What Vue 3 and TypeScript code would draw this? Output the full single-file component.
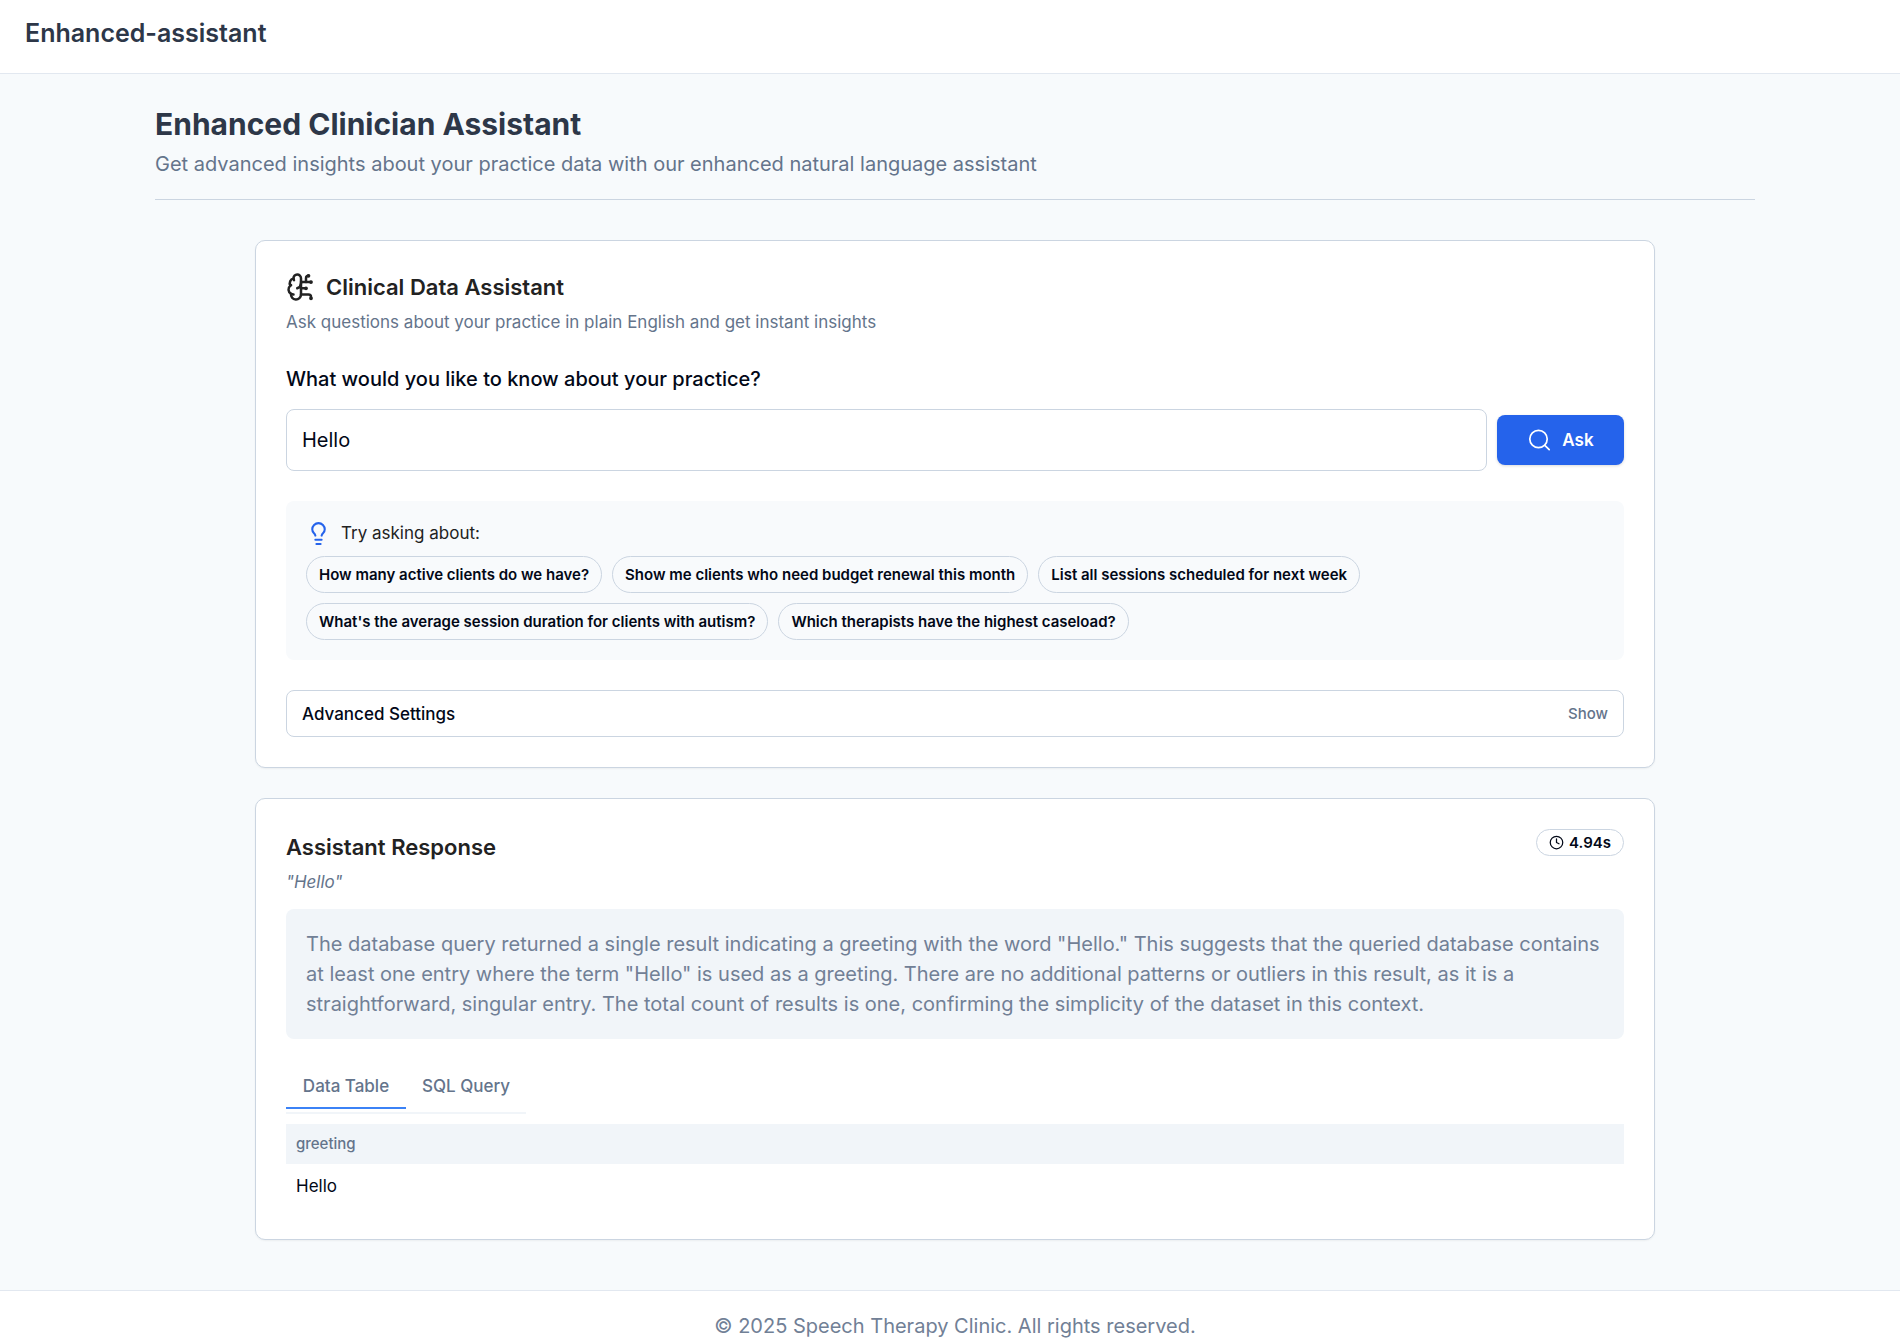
<script setup lang="ts">
import { ref } from 'vue'

const question = ref('Hello')
const suggestions: string[] = [
  'How many active clients do we have?',
  'Show me clients who need budget renewal this month',
  'List all sessions scheduled for next week',
  "What's the average session duration for clients with autism?",
  'Which therapists have the highest caseload?',
]
const activeTab = ref('Data Table')
const tabs: string[] = ['Data Table', 'SQL Query']
const columns: string[] = ['greeting']
const rows: string[][] = [['Hello']]
</script>

<template>
  <div class="page">
    <header class="topbar">Enhanced-assistant</header>

    <main class="main">
      <div class="container">
        <div class="intro">
          <h1>Enhanced Clinician Assistant</h1>
          <p>Get advanced insights about your practice data with our enhanced natural language assistant</p>
        </div>

        <div class="stack">
          <section class="card">
            <h2 class="title">
              <svg class="icon brain" viewBox="0 0 24 24" aria-hidden="true">
                <path d="M12 5a3 3 0 1 0-5.997.125 4 4 0 0 0-2.526 5.77 4 4 0 0 0 .556 6.588A4 4 0 1 0 12 18Z" />
                <path d="M9 13a4.5 4.5 0 0 0 3-4" />
                <path d="M6.003 5.125A3 3 0 0 0 6.401 6.5" />
                <path d="M3.477 10.896a4 4 0 0 1 .585-.396" />
                <path d="M6 18a4 4 0 0 1-1.967-.516" />
                <path d="M12 13h4" />
                <path d="M12 18h6a2 2 0 0 1 2 2v1" />
                <path d="M12 8h8" />
                <path d="M16 8V5a2 2 0 0 1 2-2" />
                <circle cx="16" cy="13" r=".5" />
                <circle cx="18" cy="3" r=".5" />
                <circle cx="20" cy="21" r=".5" />
                <circle cx="20" cy="8" r=".5" />
              </svg>
              Clinical Data Assistant
            </h2>
            <p class="description">Ask questions about your practice in plain English and get instant insights</p>

            <form class="ask-form" @submit.prevent>
              <label for="question">What would you like to know about your practice?</label>
              <div class="ask-row">
                <input id="question" v-model="question" type="text" />
                <button class="ask" type="submit">
                  <svg class="icon" viewBox="0 0 25 25" aria-hidden="true">
                    <circle cx="11.5" cy="11" r="8.7" />
                    <path d="M17.8 17.3l4.4 4.4" />
                  </svg>
                  Ask
                </button>
              </div>
            </form>

            <div class="hints">
              <p class="hints-title">
                <svg class="icon bulb" viewBox="0 0 24 24" aria-hidden="true">
                  <path d="M15 14c.2-1 .7-1.7 1.5-2.5 1-.9 1.5-2.2 1.5-3.5A6 6 0 0 0 6 8c0 1 .2 2.2 1.5 3.5.7.7 1.3 1.5 1.5 2.5" />
                  <path d="M9 18h6" />
                  <path d="M10 22h4" />
                </svg>
                Try asking about:
              </p>
              <div class="chips">
                <button v-for="s in suggestions" :key="s" class="chip" type="button" @click="question = s">{{ s }}</button>
              </div>
            </div>

            <button class="advanced" type="button">
              <span>Advanced Settings</span>
              <span class="show">Show</span>
            </button>
          </section>

          <section class="card">
            <div class="response-head">
              <div class="response-title">
                <h2 class="title">Assistant Response</h2>
                <p class="description quote">"Hello"</p>
              </div>
              <span class="badge">
                <svg class="icon" viewBox="0 0 24 24" aria-hidden="true">
                  <circle cx="12" cy="12" r="10" />
                  <path d="M12 6v6l4 2" />
                </svg>
                4.94s
              </span>
            </div>

            <p class="answer">
              The database query returned a single result indicating a greeting with the word "Hello." This suggests that the
              queried database contains at least one entry where the term "Hello" is used as a greeting. There are no
              additional patterns or outliers in this result, as it is a straightforward, singular entry. The total count of
              results is one, confirming the simplicity of the dataset in this context.
            </p>

            <div class="tabs" role="tablist">
              <button
                v-for="tab in tabs"
                :key="tab"
                class="tab"
                :class="{ active: tab === activeTab }"
                type="button"
                role="tab"
                :aria-selected="tab === activeTab"
                @click="activeTab = tab"
              >
                {{ tab }}
              </button>
            </div>

            <table class="results">
              <thead>
                <tr>
                  <th v-for="c in columns" :key="c" scope="col">{{ c }}</th>
                </tr>
              </thead>
              <tbody>
                <tr v-for="(row, i) in rows" :key="i">
                  <td v-for="(cell, j) in row" :key="j">{{ cell }}</td>
                </tr>
              </tbody>
            </table>
          </section>
        </div>
      </div>
    </main>

    <footer class="footer">© 2025 Speech Therapy Clinic. All rights reserved.</footer>
  </div>
</template>

<style>
html,
body {
  margin: 0;
  overflow-x: hidden;
  background: #f7fafc;
}
</style>

<style scoped>
* {
  box-sizing: border-box;
}
.page {
  font-family: Inter, "Liberation Sans", sans-serif;
  font-size: 20px;
  line-height: 30px;
  color: #020817;
}
h1,
h2,
p {
  margin: 0;
}
button,
input {
  font: inherit;
  color: inherit;
}
.icon {
  flex: none;
  fill: none;
  stroke: currentColor;
  stroke-width: 2;
  stroke-linecap: round;
  stroke-linejoin: round;
}
.topbar {
  height: 74px;
  padding: 18px 25px;
  background: #fff;
  border-bottom: 1px solid #e2e8f0;
  font-size: 25px;
  font-weight: 600;
  color: #2d3748;
}
.main {
  padding: 30px 20px 50px 30px;
}
.container {
  max-width: 1600px;
  margin: 0 auto;
}
.intro {
  padding-bottom: 20px;
  border-bottom: 1px solid #cbd5e1;
  color: #64748b;
}
h1 {
  font-size: 30px;
  line-height: 40px;
  font-weight: 700;
  color: #2d3748;
}
.intro p {
  margin-top: 5px;
}
.stack {
  display: flex;
  flex-direction: column;
  gap: 30px;
  max-width: 1400px;
  margin: 40px auto 0;
}
.card {
  padding: 30px;
  background: #fff;
  border: 1px solid #cbd5e1;
  border-radius: 10px;
  box-shadow: 0 1px 2px rgba(0, 0, 0, 0.05);
}
.title {
  display: flex;
  align-items: center;
  gap: 10px;
  font-size: 22px;
  line-height: 32px;
  font-weight: 600;
  color: #222;
}
.brain {
  width: 30px;
  height: 30px;
}
.description {
  margin-top: 7px;
  font-size: 17px;
  line-height: 24px;
  color: #64748b;
}
.quote {
  font-style: italic;
}
.ask-form {
  margin-top: 30px;
}
.ask-form label {
  display: block;
  font-weight: 500;
}
.ask-row {
  display: flex;
  align-items: center;
  gap: 10px;
  margin-top: 15px;
}
.ask-row input {
  flex: 1;
  min-width: 0;
  height: 62px;
  padding: 0 15px;
  border: 1px solid #cbd5e1;
  border-radius: 8px;
  background: #fff;
}
.ask {
  display: flex;
  align-items: center;
  justify-content: center;
  gap: 10px;
  min-width: 127px;
  height: 50px;
  padding: 0 30px;
  border: 0;
  border-radius: 8px;
  background: #2563eb;
  box-shadow: 0 1px 3px rgba(0, 0, 0, 0.15);
  font-size: 17px;
  font-weight: 600;
  color: #fff;
}
.ask .icon {
  width: 25px;
  height: 25px;
  stroke-width: 1.7;
}
.hints {
  margin-top: 30px;
  padding: 20px;
  border-radius: 8px;
  background: #f8fafc;
}
.hints-title {
  display: flex;
  align-items: center;
  gap: 10px;
  font-size: 17px;
  line-height: 25px;
  color: #222;
}
.bulb {
  width: 25px;
  height: 25px;
  color: #2563eb;
}
.chips {
  display: flex;
  flex-wrap: wrap;
  gap: 10px;
  margin-top: 10px;
}
.chip {
  height: 37px;
  padding: 0 12px;
  border: 1px solid #cbd5e1;
  border-radius: 19px;
  background: transparent;
  font-size: 15px;
  line-height: 20px;
  font-weight: 600;
}
.advanced {
  display: flex;
  align-items: center;
  justify-content: space-between;
  width: 100%;
  height: 47px;
  margin-top: 30px;
  padding: 0 15px;
  border: 1px solid #cbd5e1;
  border-radius: 8px;
  background: #fff;
  font-size: 17px;
  font-weight: 500;
}
.show {
  font-size: 15px;
  color: #64748b;
}
.response-head {
  display: flex;
  align-items: flex-start;
  justify-content: space-between;
}
.response-title {
  padding-top: 2px;
}
.badge {
  display: flex;
  align-items: center;
  gap: 5px;
  height: 27px;
  padding: 0 12px;
  border: 1px solid #cbd5e1;
  border-radius: 14px;
  font-size: 15px;
  line-height: 20px;
  font-weight: 600;
}
.badge .icon {
  width: 15px;
  height: 15px;
}
.answer {
  margin-top: 15px;
  padding: 20px;
  border-radius: 8px;
  background: #f1f5f9;
  color: #718096;
}
.tabs {
  display: flex;
  width: fit-content;
  margin-top: 20px;
  padding-bottom: 3px;
  border-bottom: 2px solid #f1f5f9;
}
.tab {
  min-width: 120px;
  height: 50px;
  padding: 6px 15px 0;
  border: 0;
  border-bottom: 2px solid transparent;
  background: transparent;
  font-size: 17px;
  font-weight: 500;
  color: #64748b;
}
.tab.active {
  border-bottom-color: #3b82f6;
}
.results {
  width: 100%;
  margin-top: 10px;
  border-collapse: collapse;
  text-align: left;
}
.results th {
  height: 40px;
  padding: 0 10px;
  background: #f1f5f9;
  font-size: 15px;
  line-height: 20px;
  font-weight: 500;
  color: #64748b;
}
.results td {
  padding: 10px;
  font-size: 17px;
  line-height: 25px;
}
.footer {
  padding: 20px 20px 20px 30px;
  background: #fff;
  border-top: 1px solid #e2e8f0;
  text-align: center;
  color: #718096;
}
</style>
